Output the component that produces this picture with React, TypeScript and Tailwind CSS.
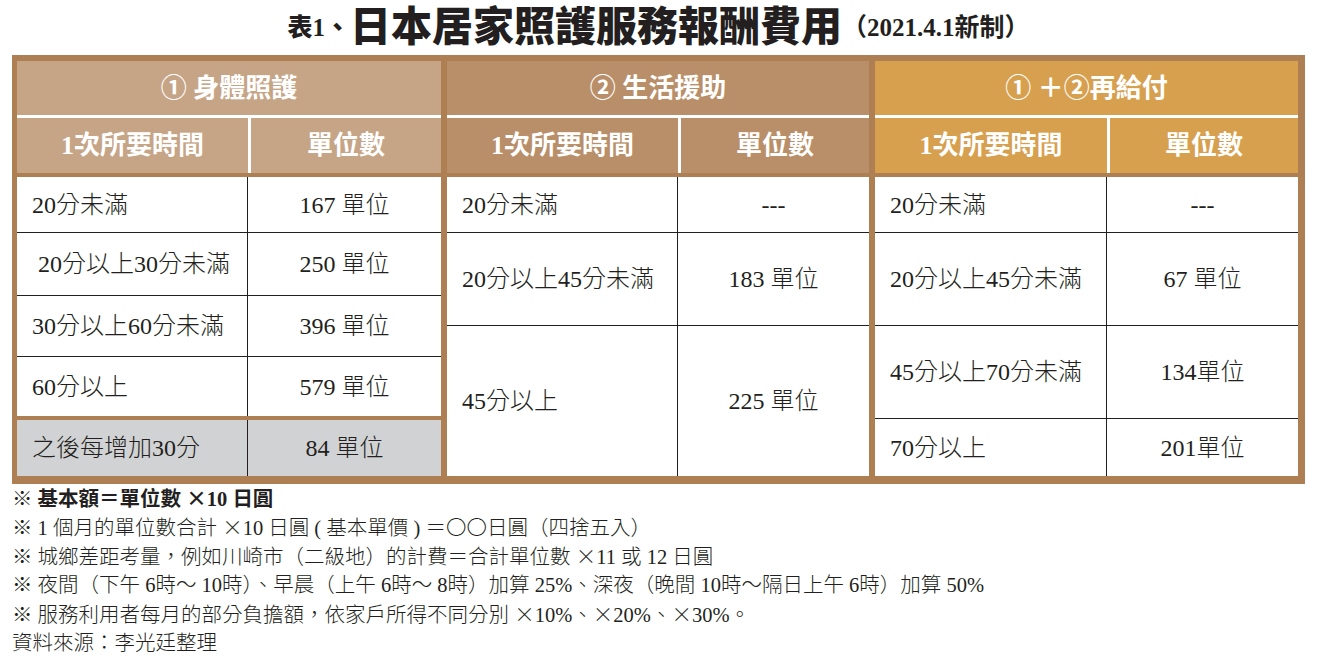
import React from "react";

const serif = "font-['Liberation_Serif','Noto_Sans_CJK_TC',serif]";

type RowDef = { h: number; left: string; right: string; gray?: boolean; brownTop?: boolean };

function Panel({
  title,
  color,
  width,
  col1,
  rows,
}: {
  title: string;
  color: string;
  width: string;
  col1: string;
  rows: RowDef[];
}) {
  return (
    <div className={`flex flex-col ${width}`}>
      <div className={`flex h-[54px] items-center justify-center ${color} text-[26px] font-bold text-white`}>{title}</div>
      <div className="h-[3px] bg-white" />
      <div className={`flex h-[55px] ${color} text-[26px] font-bold text-white`}>
        <div className={`flex ${col1} items-center justify-center`}>1次所要時間</div>
        <div className="w-[3px] bg-white" />
        <div className="flex flex-1 items-center justify-center">單位數</div>
      </div>
      <div className="h-[4px]" />
      <div className="flex flex-1 flex-col">
        {rows.map((r, i) => (
          <React.Fragment key={i}>
            {r.brownTop && <div className="h-[4px]" />}
            <div
              className={`flex ${r.gray ? "bg-[#d1d2d4]" : "bg-white"} ${
                i > 0 && !r.brownTop ? "border-t border-[#231f20]" : ""
              } text-[24px] font-light text-[#231f20]`}
              style={{ height: r.h }}
            >
              <div className={`flex ${col1} items-center pl-[15px] border-r border-[#231f20] whitespace-pre`}>{r.left}</div>
              <div className="flex flex-1 items-center justify-center">{r.right}</div>
            </div>
          </React.Fragment>
        ))}
      </div>
    </div>
  );
}

const X = () => <span className="font-['Noto_Sans_CJK_TC',sans-serif] leading-none">×</span>;

const Note = ({ bold, children }: { bold?: boolean; children: React.ReactNode }) => (
  <div className={`flex h-[29px] items-center whitespace-pre ${bold ? "font-bold" : "font-light"}`}>
    <span className="leading-none">{children}</span>
  </div>
);

export default function App() {
  return (
    <div className={`w-[1317px] h-[666px] bg-white ${serif} text-[#231f20]`}>
      <div className="flex h-[55px] items-center justify-center">
        <span className="text-[25px] font-black">表1、</span>
        <span className="text-[41px] font-black leading-none">日本居家照護服務報酬費用</span>
        <span className="text-[25px] font-bold">（2021.4.1新制）</span>
      </div>
      <div className="ml-[12px] flex h-[429px] w-[1293px] gap-[6px] bg-[#ad7f53] pb-[7px] pl-[5px] pr-[7px] pt-[6px]">
        <Panel
          title="① 身體照護"
          color="bg-[#c6a587]"
          width="w-[424px]"
          col1="w-[231px]"
          rows={[
            { h: 55, left: "20分未滿", right: "167 單位" },
            { h: 63, left: "\u00a020分以上30分未滿", right: "250 單位" },
            { h: 61, left: "30分以上60分未滿", right: "396 單位" },
            { h: 60, left: "60分以上", right: "579 單位" },
            { h: 56, left: "之後每增加30分", right: "84 單位", gray: true, brownTop: true },
          ]}
        />
        <Panel
          title="② 生活援助"
          color="bg-[#b98f69]"
          width="w-[422px]"
          col1="w-[231px]"
          rows={[
            { h: 55, left: "20分未滿", right: "---" },
            { h: 93, left: "20分以上45分未滿", right: "183 單位" },
            { h: 151, left: "45分以上", right: "225 單位" },
          ]}
        />
        <Panel
          title="① ＋②再給付"
          color="bg-[#d7a04f]"
          width="w-[423px]"
          col1="w-[232px]"
          rows={[
            { h: 55, left: "20分未滿", right: "---" },
            { h: 93, left: "20分以上45分未滿", right: "67 單位" },
            { h: 93, left: "45分以上70分未滿", right: "134單位" },
            { h: 58, left: "70分以上", right: "201單位" },
          ]}
        />
      </div>
      <div className="ml-[12px] text-[20.5px] text-[#231f20]">
        <Note bold>※ 基本額＝單位數 <X />10 日圓</Note>
        <Note>※ 1 個月的單位數合計 <X />10 日圓 ( 基本單價 ) ＝〇〇日圓（四捨五入）</Note>
        <Note>※ 城鄉差距考量，例如川崎市（二級地）的計費＝合計單位數 <X />11 或 12 日圓</Note>
        <Note>※ 夜間（下午 6時～ 10時）、早晨（上午 6時～ 8時）加算 25%、深夜（晚間 10時～隔日上午 6時）加算 50%</Note>
        <Note>※ 服務利用者每月的部分負擔額，依家戶所得不同分別 <X />10%、<X />20%、<X />30%。</Note>
        <Note>資料來源：李光廷整理</Note>
      </div>
    </div>
  );
}
